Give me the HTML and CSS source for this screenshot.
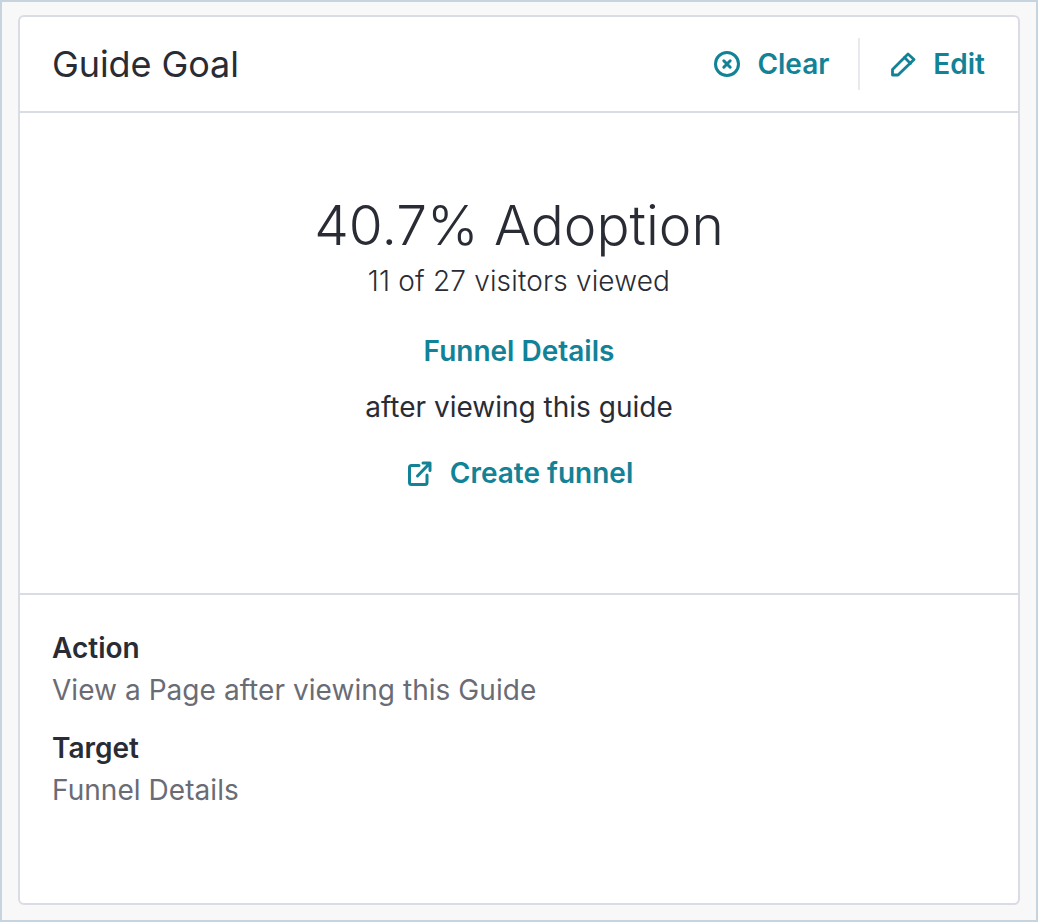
FILE: index.html
```html
<!DOCTYPE html>
<html lang="en">
<head>
    <meta charset="UTF-8">
    <title>Guide Goal</title>
    <link rel="stylesheet" href="styles.css">
</head>
<body>

<div class="card">
    <!-- Header -->
    <div class="card-header">
        <h1 class="card-title">Guide Goal</h1>
        <div class="actions">
            <a class="action action-clear">
                <svg class="icon" width="26" height="26" viewBox="0 0 26 26" fill="none" stroke="currentColor" stroke-width="3" stroke-linecap="round">
                    <circle cx="13" cy="13" r="11.500"/>
                    <path d="M9.800 9.800l6.400 6.400M16.200 9.800l-6.400 6.400"/>
                </svg>
                Clear
            </a>
            <span class="divider"></span>
            <a class="action action-edit">
                <svg class="icon" width="26" height="26" viewBox="0 0 26 26" fill="none" stroke="currentColor" stroke-width="2.800" stroke-linejoin="round" stroke-linecap="round">
                    <path d="M2.500 24v-5.500L18 3 24 8.500 8 24z"/>
                    <path d="M14.500 6.500l6 6"/>
                </svg>
                Edit
            </a>
        </div>
    </div>

    <!-- Summary -->
    <div class="summary">
        <div class="adoption">40.7% Adoption</div>
        <div class="visitors">11 of 27 visitors viewed</div>
        <a class="funnel-name">Funnel Details</a>
        <div class="after">after viewing this guide</div>
        <a class="create-funnel">
            <svg class="icon" width="25" height="25" viewBox="0 0 25 25" fill="none" stroke="currentColor" stroke-width="3" stroke-linecap="round" stroke-linejoin="round">
                <path d="M12 4.500H4.500a2 2 0 0 0-2 2V21.500a2 2 0 0 0 2 2H18a2 2 0 0 0 2-2V14"/>
                <path d="M10.500 15L22.500 2.500M16 2h7V9.500"/>
            </svg>
            Create funnel
        </a>
    </div>

    <!-- Details -->
    <div class="details">
        <div class="detail-label">Action</div>
        <div class="detail-value">View a Page after viewing this Guide</div>
        <div class="detail-label">Target</div>
        <div class="detail-value">Funnel Details</div>
    </div>
</div>

</body>
</html>
```
FILE: styles.css
```css
* {
    box-sizing: border-box;
}
body {
    height: 922px;
    margin: 0;
    padding: 13px 16px 15px;
    background-color: #f8f8f9;
    border: 2px solid #c5d4df;
    font-family: Inter, "Noto Sans", sans-serif;
    color: #2a2c35;
    overflow: hidden;
}
.card {
    height: 100%;
    background-color: #fff;
    border: 2px solid #dadce5;
    border-radius: 6px;
    display: flex;
    flex-direction: column;
}
.card-header {
    display: flex;
    align-items: center;
    justify-content: space-between;
    height: 96px;
    padding: 0 33px 0 32px;
    border-bottom: 2px solid #dadce5;
}
.card-title {
    margin: 0;
    font-size: 36px;
    font-weight: 400;
    letter-spacing: -0.1px;
}
.actions {
    display: flex;
    align-items: center;
}
.action {
    display: flex;
    align-items: center;
    gap: 17px;
    font-size: 28px;
    font-weight: 600;
    color: #128297;
}
.divider {
    width: 2px;
    height: 52px;
    margin: 0 30px 0 29px;
    background-color: #e8e9ef;
}
.summary {
    height: 482px;
    padding-top: 78px;
    border-bottom: 2px solid #dadce5;
    display: flex;
    flex-direction: column;
    align-items: center;
}
.adoption {
    font-size: 55px;
    font-weight: 300;
    line-height: 68px;
    margin-bottom: 2px;
}
.visitors {
    font-size: 28px;
    font-weight: 300;
    letter-spacing: 0.17px;
    line-height: 40px;
}
.funnel-name {
    margin-top: 30px;
    font-size: 28px;
    font-weight: 600;
    line-height: 40px;
    color: #128297;
}
.after {
    margin-top: 16px;
    font-size: 28px;
    line-height: 40px;
}
.create-funnel {
    display: flex;
    align-items: center;
    gap: 18px;
    margin-top: 26px;
    padding-left: 2px;
    font-size: 28px;
    font-weight: 600;
    line-height: 40px;
    color: #128297;
}
.details {
    padding: 33px 32px 0;
}
.detail-label {
    font-size: 28px;
    font-weight: 600;
    line-height: 40px;
}
.detail-value {
    padding-top: 2px;
    margin-bottom: 18px;
    font-size: 28px;
    letter-spacing: 0.05px;
    line-height: 40px;
    color: #6a6c75;
}
```
